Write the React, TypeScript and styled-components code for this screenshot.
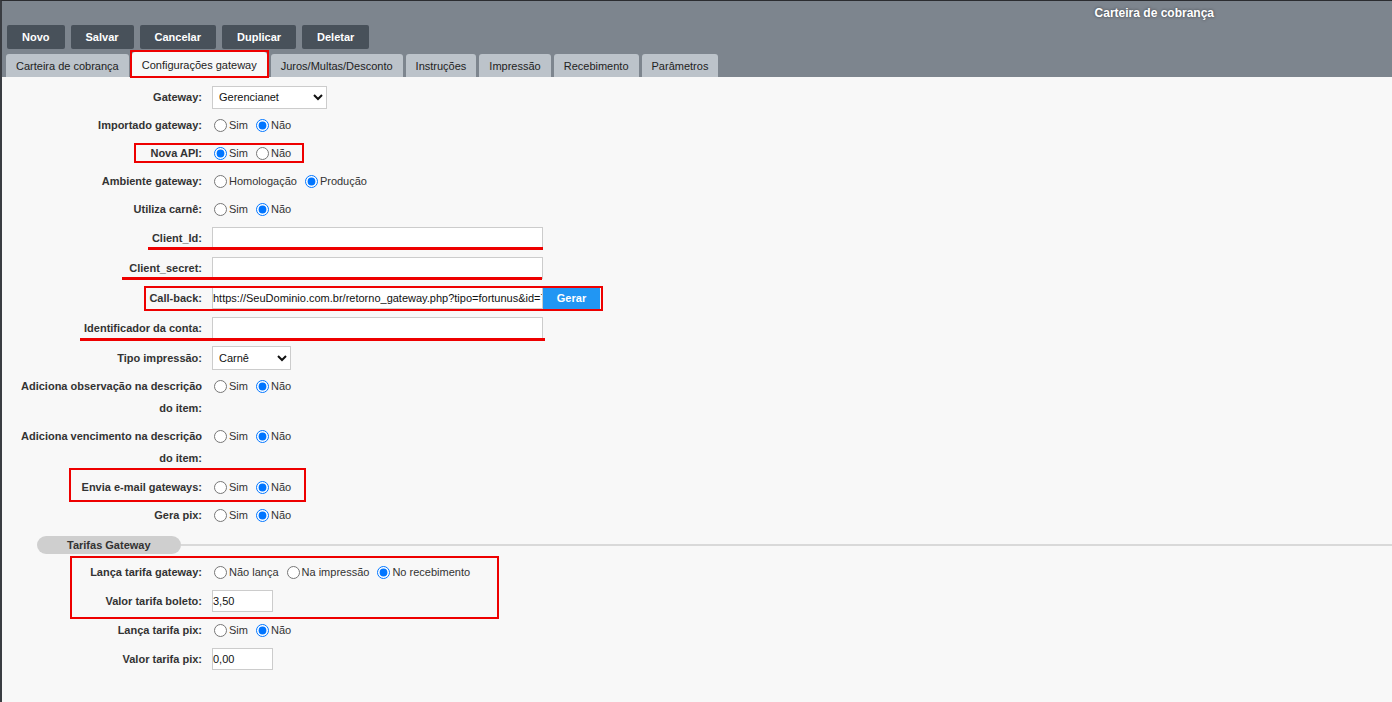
import styled, { createGlobalStyle } from "styled-components";

const GlobalStyle = createGlobalStyle`
  html, body {
    margin: 0;
    padding: 0;
    background: #f8f8f8;
  }
  body {
    font-family: "Liberation Sans", Arial, sans-serif;
    color: #333;
  }
`;

const Page = styled.div`
  display: flex;
  flex-direction: column;
  min-height: 100vh;
  box-sizing: border-box;
  border-left: 2px solid #3a3d42;
  border-top: 1px solid #2b2c30;
`;

const Header = styled.div`
  background: #7d858e;
  display: flex;
  flex-direction: column;
  height: 76px;
`;

const TitleBar = styled.div`
  display: flex;
  justify-content: flex-end;
  height: 24px;
  align-items: center;
  padding-right: 178px;
  h1 {
    margin: 0;
    font-size: 12px;
    font-weight: bold;
    color: #fff;
    text-shadow: 0 0 3px rgba(0, 0, 0, 0.55);
  }
`;

const Toolbar = styled.div`
  display: flex;
  gap: 6px;
  padding-left: 5px;
`;

const ToolButton = styled.button`
  height: 24px;
  padding: 0 15px;
  border: 0;
  border-radius: 2px;
  background: #48515a;
  color: #fff;
  font-family: inherit;
  font-size: 11px;
  font-weight: bold;
  cursor: pointer;
`;

const Tabs = styled.div`
  display: flex;
  align-items: flex-end;
  gap: 3px;
  padding-left: 4px;
  margin-top: auto;
`;

const Tab = styled.div<{ $active?: boolean; $marked?: boolean }>`
  position: relative;
  height: ${(p) => (p.$active ? 25 : 23)}px;
  padding: 0 10px;
  margin-right: ${(p) => (p.$active ? 1 : 0)}px;
  display: flex;
  align-items: center;
  border-radius: 3px 3px 0 0;
  background: ${(p) => (p.$active ? "#f8f8f8" : "#bcc3ca")};
  color: #222;
  font-size: 11px;
  white-space: nowrap;
  &::after {
    content: "";
    display: ${(p) => (p.$marked ? "block" : "none")};
    position: absolute;
    left: -2px;
    top: -2px;
    right: -2px;
    bottom: -1px;
    border: 2px solid #ee0000;
  }
`;

const Content = styled.div`
  flex: 1;
  background: #f8f8f8;
  padding-top: 6px;
  padding-bottom: 20px;
`;

const Row = styled.div<{ $h?: number; $multi?: boolean }>`
  position: relative;
  display: grid;
  grid-template-columns: 200px 1fr;
  column-gap: 10px;
  min-height: ${(p) => p.$h ?? 28}px;
  align-items: ${(p) => (p.$multi ? "start" : "center")};
  padding: ${(p) => (p.$multi ? "2px 0 4px" : "0")};
  box-sizing: border-box;
`;

const Label = styled.label`
  padding-left: 15px;
  text-align: right;
  font-size: 11px;
  font-weight: bold;
  line-height: 22px;
  color: #333;
`;

const Options = styled.div`
  display: flex;
  align-items: center;
  height: 22px;
  font-size: 11px;
  color: #333;
`;

const Option = styled.label`
  display: flex;
  align-items: center;
  margin-right: 6px;
  input {
    margin: 0 2px 0 2px;
    width: 13px;
    height: 13px;
  }
`;

const TextInput = styled.input<{ $w: number }>`
  width: ${(p) => p.$w}px;
  height: 22px;
  box-sizing: border-box;
  border: 1px solid #cccccc;
  background: #fff;
  padding: 0;
  font-family: "Liberation Sans", Arial, sans-serif;
  font-size: 11px;
  color: #111;
  outline: none;
`;

const Select = styled.select<{ $w: number; $h?: number }>`
  width: ${(p) => p.$w}px;
  height: ${(p) => p.$h ?? 23}px;
  border: 1px solid #cccccc;
  background: #fff;
  padding: 0 2px;
  font-family: "Liberation Sans", Arial, sans-serif;
  font-size: 11px;
  color: #111;
`;

const InputGroup = styled.div`
  display: flex;
  align-items: center;
`;

const GenerateButton = styled.button`
  width: 57px;
  height: 22px;
  border: 0;
  background: #2196f3;
  color: #fff;
  font-family: inherit;
  font-size: 11px;
  font-weight: bold;
`;

const Highlight = styled.span<{ $l: number; $t: number; $w: number; $h: number }>`
  position: absolute;
  left: ${(p) => p.$l}px;
  top: ${(p) => p.$t}px;
  width: ${(p) => p.$w}px;
  height: ${(p) => p.$h}px;
  box-sizing: border-box;
  border: 2px solid #ee0000;
  pointer-events: none;
`;

const Underline = styled.span<{ $l: number; $t: number; $w: number }>`
  position: absolute;
  left: ${(p) => p.$l}px;
  top: ${(p) => p.$t}px;
  width: ${(p) => p.$w}px;
  height: 3px;
  background: #ee0000;
  pointer-events: none;
`;

const SectionTitle = styled.div`
  display: flex;
  align-items: center;
  margin: 7px 0 4px 35px;
  span {
    width: 144px;
    height: 18px;
    box-sizing: border-box;
    padding-left: 30px;
    border-radius: 9px;
    background: #cfcfcf;
    font-size: 11px;
    font-weight: bold;
    line-height: 18px;
    color: #333;
  }
  &::after {
    content: "";
    flex: 1;
    height: 2px;
    background: #d9d9d9;
  }
`;

const Group = styled.div`
  position: relative;
`;

type Opt = { text: string; checked?: boolean };

function RadioRow({
  label,
  name,
  options,
  multi,
  children,
}: {
  label: string;
  name: string;
  options: Opt[];
  multi?: boolean;
  children?: React.ReactNode;
}) {
  return (
    <Row $h={28} $multi={multi}>
      <Label>{label}</Label>
      <Options>
        {options.map((o) => (
          <Option key={o.text}>
            <input type="radio" name={name} defaultChecked={o.checked} />
            {o.text}
          </Option>
        ))}
      </Options>
      {children}
    </Row>
  );
}

const simNao = (sim: boolean): Opt[] => [
  { text: "Sim", checked: sim },
  { text: "Não", checked: !sim },
];

export default function App() {
  return (
    <>
      <GlobalStyle />
      <Page>
        <Header>
          <TitleBar>
            <h1>Carteira de cobrança</h1>
          </TitleBar>
          <Toolbar>
            <ToolButton>Novo</ToolButton>
            <ToolButton>Salvar</ToolButton>
            <ToolButton>Cancelar</ToolButton>
            <ToolButton>Duplicar</ToolButton>
            <ToolButton>Deletar</ToolButton>
          </Toolbar>
          <Tabs>
            <Tab>Carteira de cobrança</Tab>
            <Tab $active $marked>
              Configurações gateway
            </Tab>
            <Tab>Juros/Multas/Desconto</Tab>
            <Tab>Instruções</Tab>
            <Tab>Impressão</Tab>
            <Tab>Recebimento</Tab>
            <Tab>Parâmetros</Tab>
          </Tabs>
        </Header>

        <Content>
          <Row $h={28}>
            <Label>Gateway:</Label>
            <div>
              <Select $w={115} defaultValue="Gerencianet">
                <option>Gerencianet</option>
              </Select>
            </div>
          </Row>
          <RadioRow label="Importado gateway:" name="importado" options={simNao(false)} />
          <RadioRow label="Nova API:" name="novaapi" options={simNao(true)}>
            <Highlight $l={132} $t={4} $w={170} $h={20} />
          </RadioRow>
          <RadioRow
            label="Ambiente gateway:"
            name="ambiente"
            options={[{ text: "Homologação" }, { text: "Produção", checked: true }]}
          />
          <RadioRow label="Utiliza carnê:" name="carne" options={simNao(false)} />

          <Row $h={30}>
            <Label>Client_Id:</Label>
            <div>
              <TextInput $w={331} />
            </div>
            <Underline $l={146} $t={24} $w={395} />
          </Row>
          <Row $h={30}>
            <Label>Client_secret:</Label>
            <div>
              <TextInput $w={331} />
            </div>
            <Underline $l={120} $t={24} $w={420} />
          </Row>
          <Row $h={30}>
            <Label>Call-back:</Label>
            <InputGroup>
              <TextInput
                $w={331}
                defaultValue="https://SeuDominio.com.br/retorno_gateway.php?tipo=fortunus&id=7"
              />
              <GenerateButton>Gerar</GenerateButton>
            </InputGroup>
            <Highlight $l={142} $t={3} $w={459} $h={25} />
          </Row>
          <Row $h={30}>
            <Label>Identificador da conta:</Label>
            <div>
              <TextInput $w={331} />
            </div>
            <Underline $l={78} $t={25} $w={465} />
          </Row>
          <Row $h={30}>
            <Label>Tipo impressão:</Label>
            <div>
              <Select $w={79} $h={24} defaultValue="Carnê">
                <option>Carnê</option>
              </Select>
            </div>
          </Row>

          <RadioRow
            label="Adiciona observação na descrição do item:"
            name="obs"
            options={simNao(false)}
            multi
          />
          <RadioRow
            label="Adiciona vencimento na descrição do item:"
            name="venc"
            options={simNao(false)}
            multi
          />
          <RadioRow label="Envia e-mail gateways:" name="email" options={simNao(false)}>
            <Highlight $l={67} $t={-5} $w={237} $h={34} />
          </RadioRow>
          <RadioRow label="Gera pix:" name="pix" options={simNao(false)} />

          <SectionTitle>
            <span>Tarifas Gateway</span>
          </SectionTitle>

          <Group>
            <RadioRow
              label="Lança tarifa gateway:"
              name="tarifa"
              options={[
                { text: "Não lança" },
                { text: "Na impressão" },
                { text: "No recebimento", checked: true },
              ]}
            />
            <Row $h={30}>
              <Label>Valor tarifa boleto:</Label>
              <div>
                <TextInput $w={61} defaultValue="3,50" />
              </div>
            </Row>
            <Highlight $l={68} $t={-2} $w={429} $h={63} />
          </Group>
          <RadioRow label="Lança tarifa pix:" name="tarifapix" options={simNao(false)} />
          <Row $h={30}>
            <Label>Valor tarifa pix:</Label>
            <div>
              <TextInput $w={61} defaultValue="0,00" />
            </div>
          </Row>
        </Content>
      </Page>
    </>
  );
}
